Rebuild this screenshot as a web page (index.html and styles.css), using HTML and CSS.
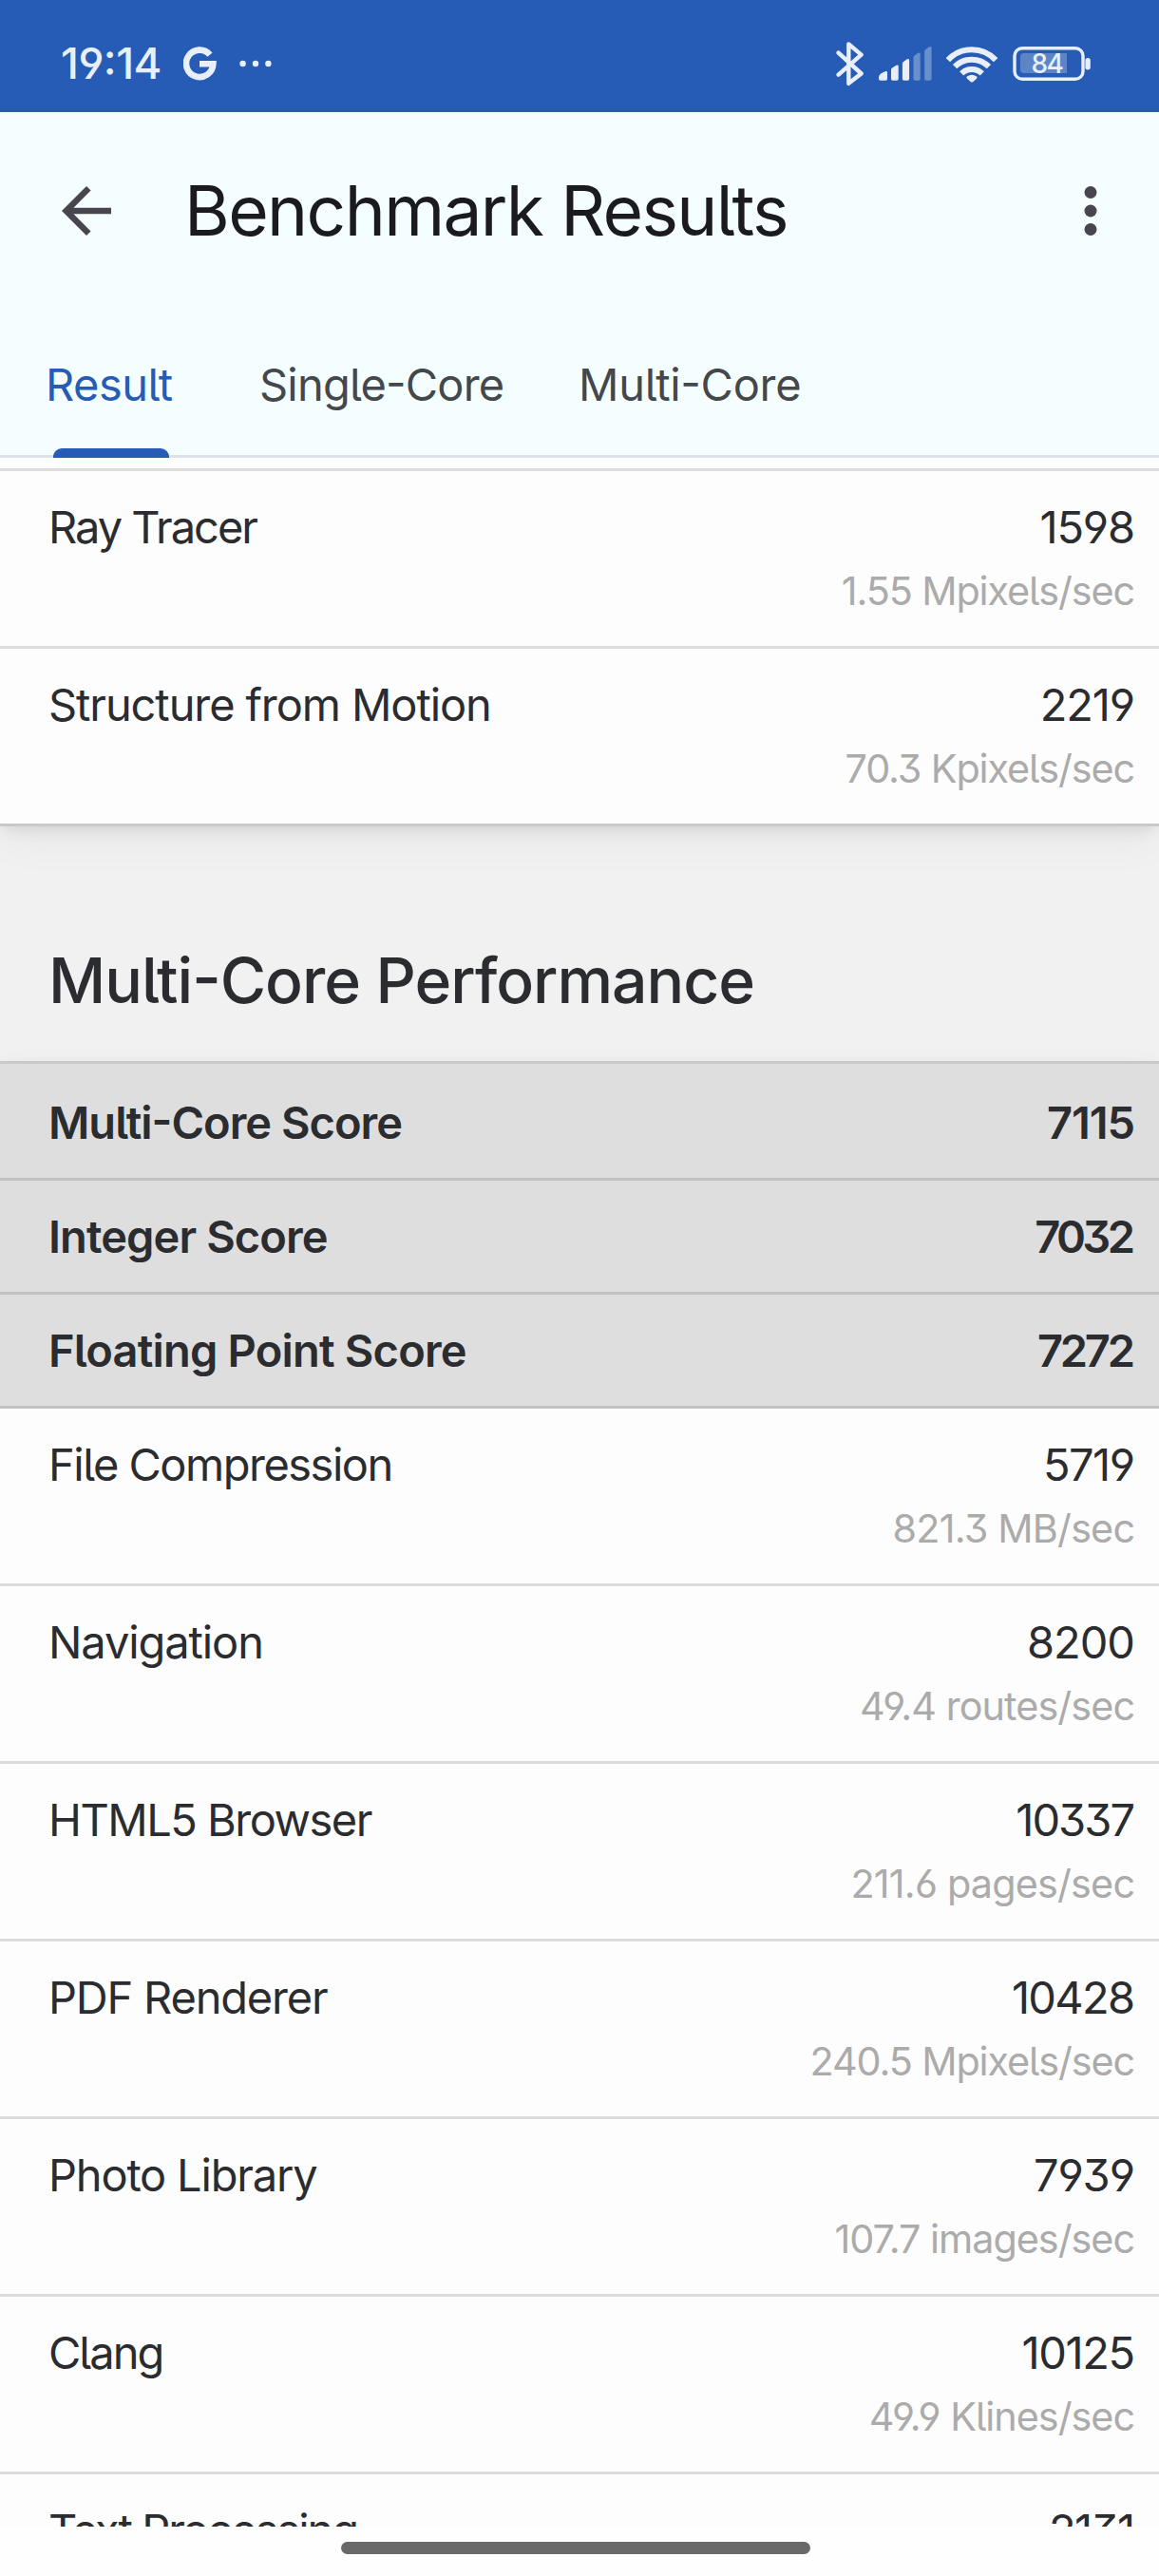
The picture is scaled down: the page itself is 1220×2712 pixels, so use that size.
FILE: index.html
```html
<!DOCTYPE html>
<html lang="en">
<head>
<meta charset="utf-8">
<title>Benchmark Results</title>
<link rel="stylesheet" href="styles.css">
</head>
<body>
<div class="screen">
  <div class="status-bar">
    <span class="clock track-05">19:14</span>
    <svg class="icon-google" width="36" height="40" viewBox="0 0 36 40" fill="none" stroke="currentColor" stroke-width="6.6"><path d="M28 10.6A14.2 14.2 0 1 0 31.4 20.2H17"/></svg>
    <svg class="icon-dots" width="36" height="10" viewBox="0 0 36 10" fill="currentColor"><circle cx="4.6" cy="5" r="3.2"/><circle cx="18" cy="5" r="3.2"/><circle cx="31.4" cy="5" r="3.2"/></svg>
    <div class="status-icons">
      <svg width="30" height="48" viewBox="0 0 30 48" fill="none" stroke="currentColor" stroke-width="4.4" stroke-linecap="round" stroke-linejoin="round"><path d="M2.6 12.6 26.6 34.5 13.3 44.8V3.4L26.6 14.6 2.6 35.6"/></svg>
      <svg width="56" height="38" viewBox="0 0 56 38" fill="currentColor"><path d="M0 33.5q0-2.5 2.2-4l4.4-2.2q2.4-1 2.4 1V35q0 1.700-1.700 1.700H1.700Q0 36.700 0 35z"/><path d="M13 25.500q0-1.500 1.500-2.300l3.500-2.200q2.700-1.300 2.700 1V35q0 1.700-1.700 1.700h-4.300q-1.700 0-1.700-1.700z"/><path d="M24.900 19q0-1.500 1.500-2.300l3-2.200q2.700-1.300 2.700 1V35q0 1.700-1.700 1.700h-3.800q-1.700 0-1.700-1.700z"/><g opacity=".35"><path d="M36.500 12.500q0-1.500 1.500-2.300l3-2.200q2.700-1.300 2.700 1V35q0 1.700-1.700 1.700h-3.800q-1.700 0-1.700-1.700z"/><path d="M48.200 6q0-1.500 1.500-2.300l3-2.200q2.900-1.300 2.900 1V35q0 1.700-1.700 1.700h-4q-1.700 0-1.700-1.700z"/></g></svg>
      <svg class="icon-wifi" width="54" height="40" viewBox="0 0 54 40" fill="none" stroke="currentColor" stroke-width="6" stroke-linecap="butt"><path d="M1.900 16.200A34 34 0 0 1 52.100 16.200" /><path d="M9.100 23.200A25 25 0 0 1 44.900 23.200"/><path d="M16.200 30.300A15.500 15.500 0 0 1 37.800 30.300"/><path d="M22 33.500q5-3.600 10 0 1.200 1 0 2.200l-3.500 3.300q-1.500 1.200-3 0L22 35.700q-1.200-1.200 0-2.200z" fill="currentColor" stroke="none"/></svg>
      <svg class="icon-battery" width="84" height="40" viewBox="0 0 84 40"><rect x="2" y="3.800" width="72" height="32.400" rx="8" fill="none" stroke="currentColor" stroke-width="3.400"/><path d="M12 9h45v21H12q-4 0-4-4V13q0-4 4-4z" fill="currentColor" opacity=".28"/><rect x="76.400" y="14" width="5.400" height="12.400" rx="2.700" fill="currentColor"/><text class="battery-level" x="36" y="30.300" text-anchor="middle">84</text></svg>
    </div>
  </div>

  <header class="toolbar">
    <svg width="78" height="78" viewBox="0 0 24 24" fill="currentColor"><path d="M20 11H7.830l5.590-5.590L12 4l-8 8 8 8 1.410-1.410L7.830 13H20v-2z"/></svg>
    <h1 class="title">Benchmark Results</h1>
    <svg width="78" height="78" viewBox="0 0 24 24" fill="currentColor"><circle cx="12" cy="6" r="2"/><circle cx="12" cy="12" r="2"/><circle cx="12" cy="18" r="2"/></svg>
  </header>

  <nav class="tabs">
    <span class="tab tab-active track-05">Result</span>
    <span class="tab track-08">Single-Core</span>
    <span class="tab track-03">Multi-Core</span>
  </nav>

  <main class="content">
    <section class="card card-single">
      <div class="row"><span class="name track-20">Ray Tracer</span><span class="value track-12">1598</span><span class="rate track-11">1.55 Mpixels/sec</span></div>
      <div class="row"><span class="name track-11">Structure from Motion</span><span class="value track-12">2219</span><span class="rate track-11">70.3 Kpixels/sec</span></div>
    </section>

    <h2 class="section-title">Multi-Core Performance</h2>

    <section class="card card-multi">
      <div class="row summary"><span class="name track-10">Multi-Core Score</span><span class="value track-11">7115</span></div>
      <div class="row summary"><span class="name track-09">Integer Score</span><span class="value track-36">7032</span></div>
      <div class="row summary"><span class="name track-08">Floating Point Score</span><span class="value track-32">7272</span></div>
      <div class="row"><span class="name track-15">File Compression</span><span class="value track-15">5719</span><span class="rate track-08">821.3 MB/sec</span></div>
      <div class="row"><span class="name track-11">Navigation</span><span class="value track-10">8200</span><span class="rate track-09">49.4 routes/sec</span></div>
      <div class="row"><span class="name track-15">HTML5 Browser</span><span class="value track-20">10337</span><span class="rate track-08">211.6 pages/sec</span></div>
      <div class="row"><span class="name track-12">PDF Renderer</span><span class="value track-17">10428</span><span class="rate track-11">240.5 Mpixels/sec</span></div>
      <div class="row"><span class="name track-12">Photo Library</span><span class="value track-11">7939</span><span class="rate track-10">107.7 images/sec</span></div>
      <div class="row"><span class="name track-20">Clang</span><span class="value track-14">10125</span><span class="rate track-10">49.9 Klines/sec</span></div>
      <div class="row"><span class="name track-20">Text Processing</span><span class="value track-17">2131</span></div>
    </section>
  </main>

  <footer class="nav-area"><div class="gesture-bar"></div></footer>
</div>
</body>
</html>
```
FILE: styles.css
```css
* { box-sizing: border-box; }

body {
  margin: 0;
  background: #fefefe;
  font-family: Inter, "Liberation Sans", sans-serif;
  font-feature-settings: "cv03", "cv04", "cv05", "cv09", "case";
  color: #2b2c30;
}

.screen {
  display: flex;
  flex-direction: column;
  width: 1220px;
  height: 2712px;
  overflow: hidden;
}

/* Status bar */
.status-bar {
  display: flex;
  align-items: center;
  flex: none;
  height: 118px;
  padding: 16px 70px 0 64px;
  background: #265cb5;
  color: #e9effa;
}
.clock {
  width: 129px;
  font-size: 45.5px;
  font-weight: 500;
  line-height: 56px;
  letter-spacing: var(--track);
}
.icon-dots { margin-left: 22px; }
.status-icons {
  display: flex;
  align-items: center;
  margin-left: auto;
}
.status-icons svg { margin-right: 15px; }
.status-icons .icon-wifi { margin-right: 16px; }
.status-icons .icon-battery { margin-right: 0; }
.battery-level {
  fill: currentColor;
  font-size: 28px;
  font-weight: 500;
  letter-spacing: -1.5px;
}

/* Toolbar */
.toolbar {
  display: flex;
  align-items: center;
  flex: none;
  height: 208px;
  padding: 0 33px 0 52px;
  background: #f5feff;
  color: #49454f;
}
.title {
  flex: 1;
  margin: 0 0 0 64px;
  font-size: 73px;
  font-weight: 400;
  line-height: 90px;
  letter-spacing: -1.63px;
  color: #1b1b1f;
}

/* Tabs */
.tabs {
  display: grid;
  grid-template-columns: 225px 336px auto;
  flex: none;
  height: 156px;
  padding: 51px 0 0 48px;
  border-bottom: 3px solid #dde1e9;
  background: #f5feff;
}
.tab {
  position: relative;
  height: 105px;
  font-size: 47px;
  line-height: 56px;
  letter-spacing: var(--track);
  color: #44474b;
}
.tab-active { color: #265cb5; }
.tab-active::after {
  content: "";
  position: absolute;
  left: 8px;
  bottom: 0;
  width: 122px;
  height: 10px;
  border-radius: 9px 9px 0 0;
  background: #265cb5;
}

/* Result list */
.content {
  flex: 1;
  min-height: 0;
  overflow: hidden;
  background: #f1f1f1;
}
.card {
  background: #fdfdfd;
  box-shadow: 0 5px 16px -4px rgba(0, 0, 0, .13), 0 16px 44px rgba(0, 0, 0, .045);
}
.card-single {
  padding-top: 11px;
}
.card-single .row:first-child { border-top: 3px solid #dcdcdc; height: 190px; }
.card-single .row:last-child { border-bottom-color: #c9c9c9; }
.card-multi { border-top: 3px solid #c9c9c9; }

.row {
  display: grid;
  grid-template-columns: auto auto;
  grid-template-rows: 56px 50px;
  row-gap: 14px;
  justify-content: space-between;
  height: 187px;
  padding: 31px 25px 0 51px;
  border-bottom: 3px solid #dcdcdc;
  font-size: 47px;
  line-height: 56px;
  white-space: nowrap;
}
.name,
.value,
.rate { letter-spacing: var(--track); }
.value,
.rate {
  text-align: right;
  margin-right: calc(var(--track) * -1);
}
.rate {
  grid-column: 1 / -1;
  font-size: 41.3px;
  line-height: 50px;
  color: #ababab;
}
.summary {
  grid-template-rows: 56px;
  height: 120px;
  border-bottom-color: #c1c1c1;
  background: #dedede;
  font-weight: 600;
}
.summary:first-child { height: 123px; padding-top: 34px; }

.section-title {
  height: 247px;
  margin: 0;
  padding: 122px 0 0 51px;
  font-size: 66px;
  font-weight: 500;
  line-height: 80px;
  letter-spacing: -1px;
}

/* Navigation area */
.nav-area {
  display: flex;
  justify-content: center;
  flex: none;
  height: 52px;
  padding: 16px 8px 0 0;
  background: #fefefe;
}
.gesture-bar {
  width: 494px;
  height: 13px;
  border-radius: 6.5px;
  background: #696969;
}

/* Letter tracking */
.track-03 { --track: -.3px; }
.track-05 { --track: -.5px; }
.track-08 { --track: -.8px; }
.track-09 { --track: -.9px; }
.track-10 { --track: -1px; }
.track-11 { --track: -1.100px; }
.track-12 { --track: -1.200px; }
.track-14 { --track: -1.400px; }
.track-15 { --track: -1.500px; }
.track-17 { --track: -1.700px; }
.track-20 { --track: -2px; }
.track-32 { --track: -3.200px; }
.track-36 { --track: -3.600px; }
```
